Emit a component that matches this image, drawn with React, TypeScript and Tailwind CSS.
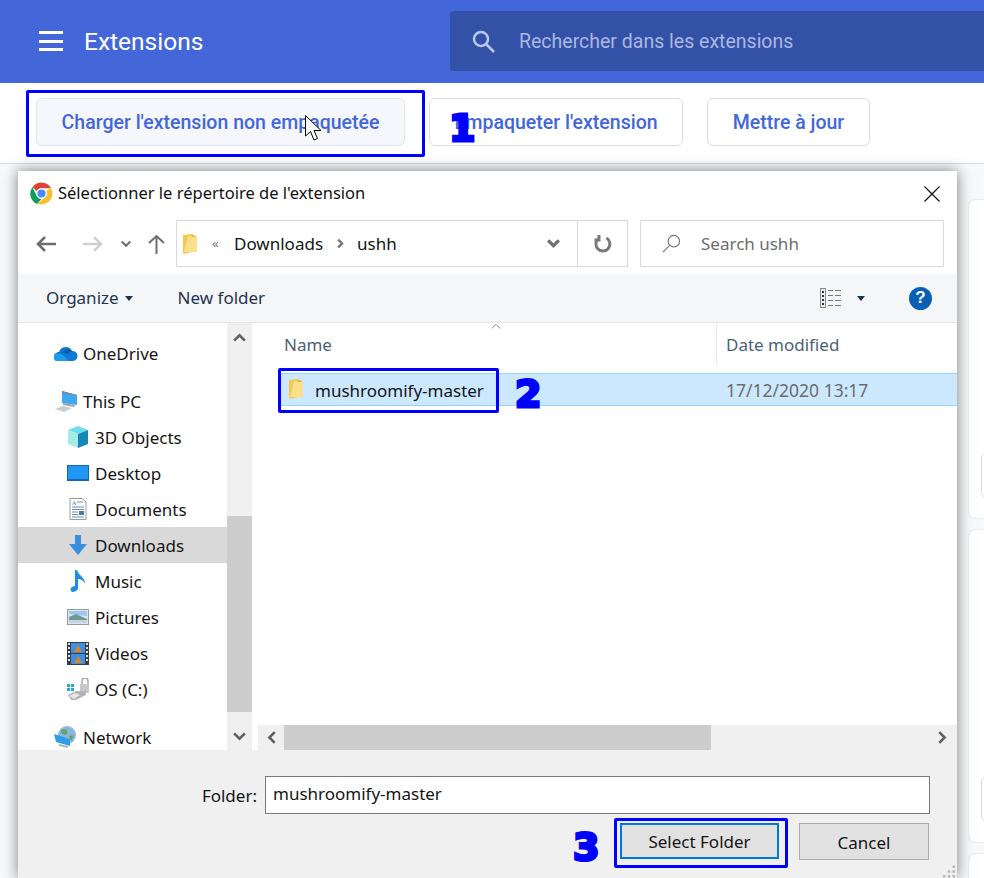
const sidebarItems = [
  { label: "OneDrive", icon: "onedrive", level: 1, gap: true },
  { label: "This PC", icon: "pc", level: 1 },
  { label: "3D Objects", icon: "cube", level: 2 },
  { label: "Desktop", icon: "desktop", level: 2 },
  { label: "Documents", icon: "documents", level: 2 },
  { label: "Downloads", icon: "downloads", level: 2, active: true },
  { label: "Music", icon: "music", level: 2 },
  { label: "Pictures", icon: "pictures", level: 2 },
  { label: "Videos", icon: "videos", level: 2 },
  { label: "OS (C:)", icon: "drive", level: 2, gap: true },
  { label: "Network", icon: "network", level: 1 },
];

function Chevron({ dir, className, color = "#606060", width = 2.4 }: { dir: "up" | "down" | "left" | "right"; className: string; color?: string; width?: number }) {
  const d = {
    up: "M2 10 L7 5 L12 10",
    down: "M2 4 L7 9 L12 4",
    left: "M10 2 L5 7 L10 12",
    right: "M4 2 L9 7 L4 12",
  }[dir];
  return (
    <svg viewBox="0 0 14 14" className={className} fill="none" stroke={color} strokeWidth={width}>
      <path d={d} />
    </svg>
  );
}

function Folder({ className }: { className: string }) {
  return (
    <svg viewBox="0 0 14 20" className={className}>
      <path d="M0 1 L9 0 L9 18 L1 20 L0 19 Z" fill="#f2c94f" />
      <path d="M5 2 L14 3 L14 18 L1 18 Z" fill="#fbe08c" />
      <path d="M9 0 L14 3 L9 3 Z" fill="#e6b93f" />
    </svg>
  );
}

function ChromeLogo() {
  return (
    <svg viewBox="0 0 48 48" className="h-[23px] w-[23px] shrink-0">
      <path d="M24 1 A23 23 0 0 1 44 13 L24 13 A11 11 0 0 0 14 19 L5 11 A23 23 0 0 1 24 1 Z" fill="#db4437" />
      <path d="M5 11 L14.500 29.500 A11 11 0 0 0 24 35 L15 46 A23 23 0 0 1 5 11 Z" fill="#0f9d58" />
      <path d="M44 13 A23 23 0 0 1 24 47 L15 46 L33.500 29.500 A11 11 0 0 0 33.500 18 Z" fill="#fbc02d" />
      <circle cx="24" cy="24" r="11" fill="#fff" />
      <circle cx="24" cy="24" r="8.500" fill="#4a8af4" />
    </svg>
  );
}

function SideIcon({ name }: { name: string }) {
  switch (name) {
    case "onedrive":
      return (
        <svg viewBox="0 0 24 16" className="h-4 w-6">
          <path d="M5 7 A7 7 0 0 1 18 6 A5 5 0 0 1 19 16 L5 16 A4.500 4.500 0 0 1 5 7 Z" fill="#0f78d4" />
          <path d="M8 7 A7 7 0 0 1 18 6 L13 9 Z" fill="#0a5ca8" />
          <path d="M4 16 A4 4 0 0 1 3 8 L9 10 L15 16 Z" fill="#1f9be8" />
        </svg>
      );
    case "pc":
      return (
        <svg viewBox="0 0 24 21" className="h-[21px] w-6">
          <path d="M8 0 L23 4 L23 14 L8 12 Z" fill="#3fa9f0" />
          <path d="M8 0 L23 4 L23 5 L8 2 Z" fill="#7b8794" />
          <path d="M9 12 L21 14 L20 16 L9 14 Z" fill="#9aa5b0" />
          <path d="M1 18 L9 15 L18 17 L10 21 Z" fill="#c9cdd2" />
        </svg>
      );
    case "cube":
      return (
        <svg viewBox="0 0 22 22" className="ml-px h-[22px] w-[22px]">
          <path d="M11 0 L21 4 L11 8 L1 4 Z" fill="#6fdcec" />
          <path d="M1 4 L11 8 L11 22 L1 18 Z" fill="#a7ebe8" />
          <path d="M11 8 L21 4 L21 18 L11 22 Z" fill="#1288b8" />
        </svg>
      );
    case "desktop":
      return (
        <div className="ml-px h-4 w-[22px] border border-b-2 border-[#1168b8] bg-[#2196f3]" />
      );
    case "documents":
      return (
        <svg viewBox="0 0 18 22" className="ml-[3px] h-[22px] w-[18px]">
          <path d="M1 .5 H13 L17 4 V21.500 H1 Z" fill="#fff" stroke="#9a9a9a" />
          <text x="3" y="7" fontSize="6" fontFamily="Liberation Serif, serif" fill="#2b7cd3">A</text>
          <path d="M8 4 H14 M3 9 H15 M3 11.500 H15 M3 14 H9 M3 16.500 H9 M3 19 H15" stroke="#6d8eb0" />
          <rect x="10" y="13" width="5" height="4" fill="#4a7aa8" />
        </svg>
      );
    case "downloads":
      return (
        <svg viewBox="0 0 18 20" className="ml-[3px] h-5 w-[18px]">
          <path d="M6 0 H12 V9 H18 L9 20 L0 9 H6 Z" fill="#3a8ee0" />
        </svg>
      );
    case "music":
      return (
        <svg viewBox="0 0 16 22" className="ml-1 h-[22px] w-4">
          <path d="M5 0 H7 C8 5 15 7 15 14 C14 11 11 9 8 9 V18 C8 21 4 22 2 22 C0 21 0 18 2 17 C3 16 5 16 5 16 Z" fill="#1e8fe0" />
        </svg>
      );
    case "pictures":
      return (
        <svg viewBox="0 0 22 16" className="ml-px h-4 w-[22px]">
          <rect x=".5" y=".5" width="21" height="15" fill="#dbe7f0" stroke="#9a9a9a" />
          <path d="M2 2 H20 V7 L2 5 Z" fill="#9cc7e8" />
          <path d="M2 8 L9 5 L20 10 V14 H2 Z" fill="#6f9a96" />
          <path d="M2 11 L20 11 V14 H2 Z" fill="#c3d6e0" />
        </svg>
      );
    case "videos":
      return (
        <svg viewBox="0 0 22 23" className="ml-px h-[23px] w-[22px]">
          <rect width="22" height="23" fill="#3d3d3d" />
          <rect x="4" y="1" width="14" height="10" fill="#3f8fe0" />
          <rect x="4" y="12" width="14" height="10" fill="#3f8fe0" />
          <path d="M11 3 L15 10 H7 Z M11 14 L15 21 H7 Z" fill="#d9842b" />
          <path d="M1 2 H3 M1 6 H3 M1 10 H3 M1 14 H3 M1 18 H3 M19 2 H21 M19 6 H21 M19 10 H21 M19 14 H21 M19 18 H21" stroke="#ddd" strokeWidth="2" />
        </svg>
      );
    case "drive":
      return (
        <svg viewBox="0 0 24 22" className="h-[22px] w-6">
          <path d="M1 6 H4 V9 H1 Z M5 6 H8 V9 H5 Z M1 10 H4 V13 H1 Z M5 10 H8 V13 H5 Z" fill="#20a4e8" />
          <path d="M16 6 V3 A3 3 0 0 1 22 3 V6" fill="none" stroke="#a8a8a8" strokeWidth="1.500" />
          <rect x="14" y="6" width="9" height="9" fill="#c8c8c8" />
          <path d="M2 17 L10 13 H20 V17 L10 22 H5 Z" fill="#b5b5b5" />
          <path d="M3 18 L9 15 L14 17 L8 21 Z" fill="#e4e4e4" />
        </svg>
      );
    default:
      return (
        <svg viewBox="0 0 24 22" className="h-[22px] w-6">
          <circle cx="13" cy="9" r="9" fill="#8ab8dc" />
          <path d="M7 4 C11 2 15 5 13 8 C10 10 7 8 7 4 Z M15 10 L20 9 L17 15 Z" fill="#6a9f62" />
          <path d="M0 8 L16 13 L16 20 L2 16 Z" fill="#2b9fe8" />
          <path d="M5 18 L14 20 L14 22 L5 20 Z" fill="#aab2ba" />
        </svg>
      );
  }
}

function SidebarRow({ item }: { item: (typeof sidebarItems)[number] }) {
  return (
    <div
      className={`flex h-9 shrink-0 items-center gap-[5px] ${item.level === 1 ? "pl-9" : "pl-12"} ${item.active ? "bg-[#d9d9d9]" : ""} ${item.gap ? "mb-3" : ""}`}
    >
      <div className="flex w-6 shrink-0 items-center">
        <SideIcon name={item.icon} />
      </div>
      <span className="pt-px">{item.label}</span>
    </div>
  );
}

function ExplorerDialog() {
  return (
    <div className="absolute left-[18px] top-[171px] flex h-[707px] w-[939px] flex-col bg-white font-['Noto_Sans',sans-serif] text-[17px] text-[#151515] shadow-[0_0_14px_rgba(0,0,0,0.5)]">
      {/* title bar */}
      <div className="flex h-[43px] shrink-0 items-center pl-3 pr-[17px] pt-[2px]">
        <ChromeLogo />
        <span className="ml-[5px] text-[16.5px] text-[#111]">Sélectionner le répertoire de l'extension</span>
        <svg viewBox="0 0 16 16" className="ml-auto h-4 w-4" stroke="#111" strokeWidth="1.200">
          <path d="M.5 .5 L15.500 15.500 M15.500 .5 L.5 15.500" />
        </svg>
      </div>

      {/* navigation */}
      <div className="flex h-[60px] shrink-0 pl-[18px] pr-[13px] pt-[6px]">
        <div className="flex h-[47px] items-center">
          <svg viewBox="0 0 20 16" className="h-4 w-5" fill="none" stroke="#6e6e6e" strokeWidth="2.500">
            <path d="M20 8 H2 M9 1 L2 8 L9 15" />
          </svg>
          <svg viewBox="0 0 20 16" className="ml-[27px] h-4 w-5" fill="none" stroke="#d0d0d0" strokeWidth="2.500">
            <path d="M0 8 H18 M11 1 L18 8 L11 15" />
          </svg>
          <Chevron dir="down" className="ml-[17px] h-3 w-3" color="#6e6e6e" />
          <svg viewBox="0 0 17 20" className="ml-[16px] h-5 w-[17px]" fill="none" stroke="#6e6e6e" strokeWidth="2">
            <path d="M8.500 20 V2 M1 9 L8.500 2 L16 9" />
          </svg>
        </div>
        <div className="ml-[11px] flex h-[47px] w-[452px] items-center border border-[#d9d9d9]">
          <Folder className="ml-[6px] h-5 w-[14px]" />
          <span className="ml-[15px] w-[22px] text-[13px] text-[#777]">«</span>
          <span>Downloads</span>
          <Chevron dir="right" className="ml-[12px] h-[11px] w-[11px]" color="#777" width={3} />
          <span className="ml-[11px]">ushh</span>
          <Chevron dir="down" className="ml-auto mr-[16px] h-[15px] w-[15px]" color="#707070" width={3} />
          <div className="flex h-full w-[50px] items-center justify-center border-l border-[#d9d9d9]">
            <svg viewBox="0 0 18 18" className="h-[18px] w-[18px]" fill="none" stroke="#7a7a7a" strokeWidth="3">
              <path d="M12.500 3 A7 7 0 1 1 5 3.200 M5 0 V5 H0.500" />
            </svg>
          </div>
        </div>
        <div className="ml-3 flex h-[47px] flex-1 items-center border border-[#d9d9d9] text-[#6d6d6d]">
          <svg viewBox="0 0 20 20" className="ml-[21px] h-[19px] w-[19px]" fill="none" stroke="#777" strokeWidth="1.200">
            <circle cx="12.500" cy="7.500" r="6" />
            <path d="M8 12 L1 19" />
          </svg>
          <span className="ml-[20px]">Search ushh</span>
        </div>
      </div>

      {/* command bar */}
      <div className="flex h-[49px] shrink-0 items-center border-b border-[#e3e5e7] bg-[#f5f6f7] pl-7 pr-[25px] text-[#1e3350]">
        <span>Organize</span>
        <span className="ml-[6px] h-0 w-0 border-x-[4.500px] border-t-[5px] border-x-transparent border-t-[#1e3350]" />
        <span className="ml-[45px]">New folder</span>
        <svg viewBox="0 0 22 20" className="ml-auto h-5 w-[22px]" fill="none" stroke="#8a8a8a">
          <rect x=".5" y=".5" width="5" height="19" fill="#eee" />
          <path d="M2 4 H4 M2 8 H4 M2 12 H4 M2 16 H4" stroke="#333" strokeWidth="2" />
          <path d="M8 2.500 H13 M15 2.500 H21 M8 7.500 H13 M15 7.500 H21 M8 12.500 H13 M15 12.500 H21 M8 17.500 H13 M15 17.500 H21" stroke="#777" />
        </svg>
        <span className="ml-[15px] h-0 w-0 border-x-[4.500px] border-t-[5px] border-x-transparent border-t-[#1e3350]" />
        <span className="ml-[44px] flex h-[23px] w-[23px] items-center justify-center rounded-full bg-[#0a5fb4] font-['Liberation_Sans',sans-serif] text-[17px] font-bold text-white">
          ?
        </span>
      </div>

      {/* body */}
      <div className="flex min-h-0 flex-1 bg-white">
        <div className="flex w-[209px] shrink-0 flex-col overflow-hidden pt-3">
          {sidebarItems.map((item) => (
            <SidebarRow key={item.label} item={item} />
          ))}
        </div>

        <div className="flex w-[25px] shrink-0 flex-col bg-[#f0f0f0]">
          <div className="flex h-[193px] shrink-0 items-center justify-center pb-[164px]">
            <Chevron dir="up" className="h-[15px] w-[15px]" />
          </div>
          <div className="h-[196px] shrink-0 bg-[#cdcdcd]" />
          <div className="flex flex-1 items-end justify-center pb-[6px]">
            <Chevron dir="down" className="h-[15px] w-[15px]" />
          </div>
        </div>

        <div className="ml-[6px] flex min-w-0 flex-1 flex-col">
          <div className="flex h-[42px] shrink-0 text-[#4c5f78]">
            <div className="relative flex w-[458px] items-center pl-[26px] pt-px">
              <span>Name</span>
              <Chevron dir="up" className="absolute left-[232px] top-[-3px] h-3 w-3" color="#777" width={1} />
            </div>
            <div className="flex flex-1 items-center border-l border-[#e3e5e7] pl-[9px] pt-px">Date modified</div>
          </div>
          <div className="ml-[21px] mt-[8px] flex h-[33px] shrink-0 items-center border-y border-[#99d1ff] bg-[#cce8ff] pt-[2px]">
            <div className="flex w-[438px] items-center pl-[10px]">
              <Folder className="mb-[3px] h-5 w-[14px]" />
              <span className="ml-3">mushroomify-master</span>
            </div>
            <span className="pl-[9px] text-[17.5px] text-[#6d6d6d]">17/12/2020 13:17</span>
          </div>
          <div className="mt-auto flex h-[25px] shrink-0 bg-[#f0f0f0]">
            <div className="flex w-[26px] items-center justify-center">
              <Chevron dir="left" className="h-[15px] w-[15px]" />
            </div>
            <div className="w-[427px] bg-[#cdcdcd]" />
            <div className="flex flex-1 items-center justify-end pr-[7px]">
              <Chevron dir="right" className="h-[15px] w-[15px]" />
            </div>
          </div>
        </div>
      </div>

      {/* footer */}
      <div className="relative flex h-[128px] shrink-0 flex-col bg-[#f0f0f0] pt-[26px]">
        <div className="flex items-center justify-end pr-[27px]">
          <span className="mr-2 pt-[2px]">Folder:</span>
          <div className="flex h-[38px] w-[665px] items-center border border-[#7a7a7a] bg-white pb-[3px] pl-[7px]">
            mushroomify-master
          </div>
        </div>
        <div className="mt-[9px] flex items-start justify-end gap-5 pr-7">
          <button className="h-9 w-[159px] border-2 border-[#0078d7] bg-[#e1e1e1] pt-[2px]">Select Folder</button>
          <button className="h-[37px] w-[130px] border border-[#adadad] bg-[#e1e1e1] pt-[2px]">Cancel</button>
        </div>
        <svg viewBox="0 0 10 10" className="absolute bottom-0 right-[2px] h-[13px] w-[12px]" fill="#b5b5b5">
          <path d="M8 0 h2 v2 h-2 Z M8 4 h2 v2 h-2 Z M4 4 h2 v2 h-2 Z M8 8 h2 v2 h-2 Z M4 8 h2 v2 h-2 Z M0 8 h2 v2 h-2 Z" />
        </svg>
      </div>
    </div>
  );
}

export default function App() {
  return (
    <div className="relative flex h-[878px] w-[984px] flex-col overflow-hidden bg-[#f8f9fa] font-['Roboto',sans-serif]">
      <header className="flex h-[83px] shrink-0 items-center bg-[#4367d9] pb-px pl-[39px] text-white">
        <div className="flex w-[24px] flex-col gap-[5.500px]">
          <div className="h-[3px] bg-white" />
          <div className="h-[3px] bg-white" />
          <div className="h-[3px] bg-white" />
        </div>
        <h1 className="ml-[21px] pt-[3px] text-[24.500px]">Extensions</h1>
        <div className="ml-auto flex h-[60px] w-[534px] items-center rounded-l-[4px] bg-[#3451a8] pl-[21px]">
          <svg viewBox="0 0 24 24" className="h-6 w-6" fill="none" stroke="#bcc9ee" strokeWidth="2.500">
            <circle cx="10" cy="10" r="7" />
            <path d="M15 15 L23 23" />
          </svg>
          <span className="ml-[24px] pt-[2px] text-[19.500px] text-[#aab8e2]">Rechercher dans les extensions</span>
        </div>
      </header>

      <div className="flex h-[81px] shrink-0 items-start gap-6 border-b border-[#dadce0] bg-white pl-9 pt-[15px] text-[19.500px] font-medium text-[#4367d9]">
        <button className="h-12 w-[369px] rounded-[6px] border border-[#e0e4f0] bg-[#f5f7fd] pt-[2px]">Charger l'extension non empaquetée</button>
        <button className="h-12 w-[254px] rounded-[6px] border border-[#dadce0] bg-white pt-[2px]">Empaqueter l'extension</button>
        <button className="h-12 w-[163px] rounded-[6px] border border-[#dadce0] bg-white pt-[2px]">Mettre à jour</button>
      </div>

      {/* extension cards behind the dialog */}
      <main className="flex flex-col gap-3 pl-[969px] pt-9">
        {[318, 312, 312].map((h, i) => (
          <div key={i} style={{ height: h }} className="relative w-[40px] shrink-0 rounded-[6px] bg-white shadow-[0_0_2px_rgba(0,0,0,0.2)]">
            <div className="absolute bottom-5 left-3 h-[46px] w-[30px] rounded-[6px] border border-[#dadce0]" />
          </div>
        ))}
      </main>

      <ExplorerDialog />

      {/* annotations */}
      <div className="absolute left-[26px] top-[90px] h-[67px] w-[399px] rounded-[2px] border-[3px] border-[#0000ff]" />
      <div className="absolute left-[278px] top-[368px] h-[45px] w-[221px] rounded-[2px] border-[3px] border-[#0000ff]" />
      <div className="absolute left-[614px] top-[818px] h-[50px] w-[174px] rounded-[2px] border-[3px] border-[#0000ff]" />
      <span className="absolute left-[449px] top-[109px] font-['DejaVu_Sans',sans-serif] text-[38px] font-bold leading-none text-[#0000ff] [-webkit-text-stroke:3px_#0000ff]">1</span>
      <span className="absolute left-[515px] top-[375px] font-['DejaVu_Sans',sans-serif] text-[38px] font-bold leading-none text-[#0000ff] [-webkit-text-stroke:3px_#0000ff]">2</span>
      <span className="absolute left-[573px] top-[828px] font-['DejaVu_Sans',sans-serif] text-[38px] font-bold leading-none text-[#0000ff] [-webkit-text-stroke:3px_#0000ff]">3</span>

      <svg viewBox="0 0 18 28" className="absolute left-[305px] top-[115px] h-7 w-[18px]" fill="#fff" stroke="#000">
        <path d="M.5 .5 V21 L5.500 16.500 L9 25 L12.500 23.500 L9 15.500 H16 Z" />
      </svg>
    </div>
  );
}
